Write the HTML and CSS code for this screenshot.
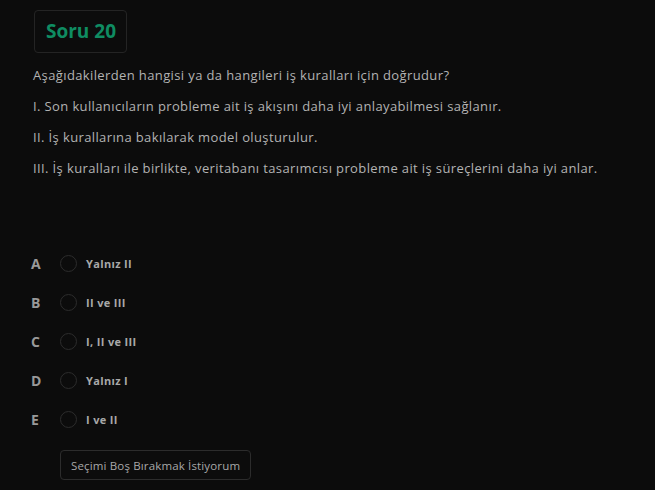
FILE: index.html
```html
<!DOCTYPE html>
<html lang="tr">
<head>
<meta charset="utf-8">
<link rel="stylesheet" href="styles.css">
</head>
<body>
<main class="question">
  <div class="badge">Soru 20</div>
  <div class="stem">
    <p>Aşağıdakilerden hangisi ya da hangileri iş kuralları için doğrudur?</p>
    <p>I. Son kullanıcıların probleme ait iş akışını daha iyi anlayabilmesi sağlanır.</p>
    <p>II. İş kurallarına bakılarak model oluşturulur.</p>
    <p>III. İş kuralları ile birlikte, veritabanı tasarımcısı probleme ait iş süreçlerini daha iyi anlar.</p>
  </div>
  <ul class="options">
    <li class="option"><span class="letter">A</span><span class="radio"></span><span class="label">Yalnız II</span></li>
    <li class="option"><span class="letter">B</span><span class="radio"></span><span class="label">II ve III</span></li>
    <li class="option"><span class="letter">C</span><span class="radio"></span><span class="label">I, II ve III</span></li>
    <li class="option"><span class="letter">D</span><span class="radio"></span><span class="label">Yalnız I</span></li>
    <li class="option"><span class="letter">E</span><span class="radio"></span><span class="label">I ve II</span></li>
  </ul>
  <button class="skip">Seçimi Boş Bırakmak İstiyorum</button>
</main>
</body>
</html>
```
FILE: styles.css
```css
html, body {
  margin: 0;
  padding: 0;
  background: #0c0c0c;
  height: 100%;
}
body {
  font-family: "Open Sans", "DejaVu Sans", sans-serif;
  color: #b3b3b3;
}
.question {
  padding: 10px 0 0 33px;
  display: flex;
  flex-direction: column;
  align-items: flex-start;
}
.badge {
  border: 1px solid #242424;
  border-radius: 4px;
  padding: 0 10px 0 11px;
  height: 41px;
  line-height: 41px;
  font-size: 19px;
  font-weight: 700;
  color: #0f8c62;
  margin-left: 1px;
}
.stem {
  margin-top: 14px;
  font-size: 13px;
  letter-spacing: 0.38px;
}
.stem p {
  margin: 0 0 14px;
  line-height: 17px;
}
.options {
  list-style: none;
  margin: 66px 0 0;
  padding: 0;
  display: flex;
  flex-direction: column;
  gap: 22px;
}
.option {
  display: flex;
  align-items: center;
  height: 17px;
}
.letter {
  width: 29px;
  font-size: 14px;
  font-weight: 700;
  color: #999999;
  margin-left: -2px;
  margin-top: -4px;
}
.radio {
  width: 15px;
  height: 15px;
  border: 1px solid #2c2c2c;
  border-radius: 50%;
  margin-top: -4px;
}
.label {
  margin-left: 9px;
  font-size: 11px;
  font-weight: 700;
  letter-spacing: 0.35px;
  color: #a8a8a8;
  margin-top: -4px;
}
.skip {
  margin: 20px 0 0 27px;
  background: transparent;
  border: 1px solid #2c2c2c;
  border-radius: 4px;
  height: 30px;
  padding: 0 10px;
  font-family: inherit;
  font-size: 11.5px;
  letter-spacing: 0.15px;
  color: #a8a8a8;
}
```
